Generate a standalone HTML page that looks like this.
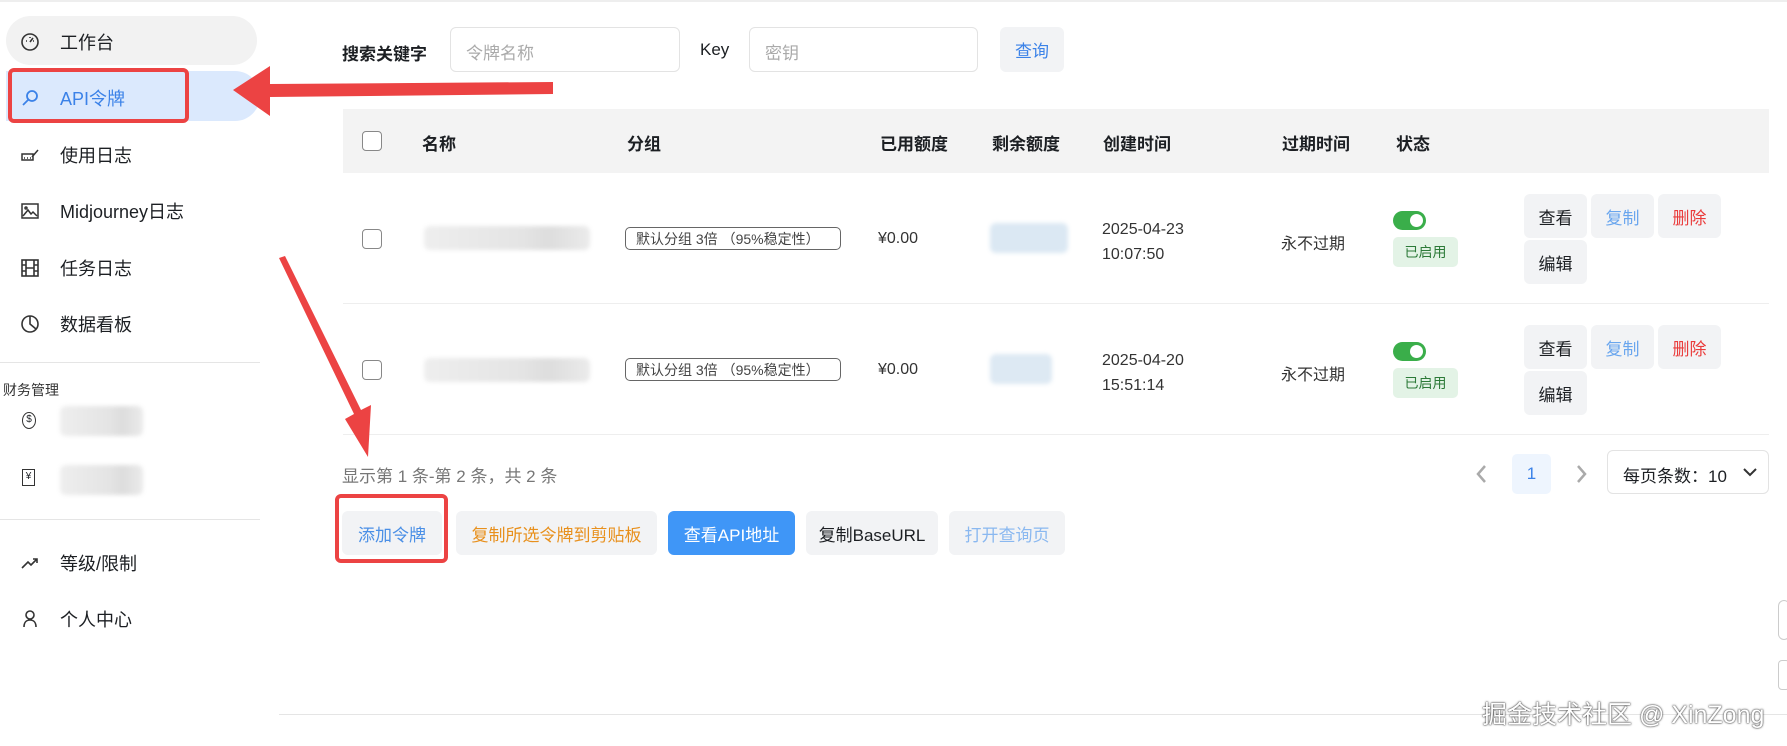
<!DOCTYPE html>
<html><head><meta charset="utf-8">
<style>
*{box-sizing:border-box;margin:0;padding:0}
body{width:1787px;height:746px;overflow:hidden;background:#fff;font-family:"Liberation Sans","Noto Sans CJK SC",sans-serif;color:#1c1f23;position:relative}
.abs{position:absolute}
.nav{position:absolute;left:20px;font-size:18px;color:#1c1f23;display:flex;align-items:center}
.nav svg{width:20px;height:20px;margin-right:20px}
.th{position:absolute;top:130px;font-size:17px;font-weight:bold;color:#1c1f23}
.cb{position:absolute;width:20px;height:20px;border:1.5px solid #888;border-radius:4px;background:#fff}
.btn{position:absolute;background:#f2f3f5;border-radius:6px;display:flex;align-items:center;justify-content:center;font-size:17px}
.tag{position:absolute;left:625px;width:216px;height:23px;border:1px solid #666;border-radius:5px;font-size:14px;color:#444;display:flex;align-items:center;padding-left:10px}
.td{position:absolute;font-size:16px;color:#333}
.blur{position:absolute;background:linear-gradient(90deg,#eee,#e4e4e4 60%,#ddd 75%,#ebebeb);filter:blur(2px);border-radius:6px}
</style></head><body>
<div class="abs" style="left:0;top:0;width:1787px;height:2px;background:#eee"></div>
<!-- sidebar -->
<div class="abs" style="left:6px;top:16px;width:251px;height:49px;background:#f2f2f2;border-radius:25px"></div>
<div class="abs" style="left:6px;top:71px;width:254px;height:50px;background:#dbe9fd;border-radius:0 25px 25px 0"></div>
<div class="abs" style="left:8px;top:68px;width:181px;height:55px;border:4px solid #ec4343;border-radius:6px"></div>
<div class="nav" style="top:29px"><svg viewBox="0 0 20 20" fill="none" stroke="#333" stroke-width="1.6"><circle cx="10" cy="10" r="8"/><path d="M10 10l3-4M6 9h1M13 9h1M10 5v1"/></svg>工作台</div>
<div class="nav" style="top:85px;color:#3b82e8"><svg viewBox="0 0 20 20" fill="none" stroke="#3b82e8" stroke-width="1.8"><circle cx="12" cy="8" r="5"/><path d="M8 12l-5 5"/></svg>API令牌</div>
<div class="nav" style="top:142px"><svg viewBox="0 0 20 20" fill="none" stroke="#333" stroke-width="1.5"><path d="M2 9h11v6H2zM12 12l6-7M4 13h1M7 13h1M10 13h1"/></svg>使用日志</div>
<div class="nav" style="top:198px"><svg viewBox="0 0 20 20" fill="none" stroke="#333" stroke-width="1.5"><rect x="2" y="3" width="16" height="14"/><path d="M3 15l5-6 3 4 2-2 4 4"/><circle cx="6" cy="7" r="1"/></svg>Midjourney日志</div>
<div class="nav" style="top:255px"><svg viewBox="0 0 20 20" fill="none" stroke="#333" stroke-width="1.6"><rect x="2" y="2" width="16" height="16"/><path d="M6 2v16M14 2v16M2 7h4M2 13h4M14 7h4M14 13h4M6 10h8"/></svg>任务日志</div>
<div class="nav" style="top:311px"><svg viewBox="0 0 20 20" fill="none" stroke="#333" stroke-width="1.6"><circle cx="10" cy="10" r="8"/><path d="M10 2v8l6 5"/></svg>数据看板</div>
<div class="abs" style="left:0;top:362px;width:260px;height:1px;background:#e5e5e5"></div>
<div class="abs" style="left:3px;top:380px;font-size:14px;color:#333">财务管理</div>
<div class="abs" style="left:22px;top:412px;width:14px;height:17px;border:1.4px solid #333;border-radius:50%;font-size:10px;text-align:center;line-height:14px">$</div>
<div class="blur" style="left:60px;top:406px;width:83px;height:30px"></div>
<div class="abs" style="left:22px;top:469px;width:13px;height:17px;border:1.4px solid #333;font-size:10px;text-align:center;line-height:14px">¥</div>
<div class="blur" style="left:60px;top:465px;width:83px;height:30px"></div>
<div class="abs" style="left:0;top:519px;width:260px;height:1px;background:#e5e5e5"></div>
<div class="nav" style="top:550px"><svg viewBox="0 0 20 20" fill="none" stroke="#333" stroke-width="1.6"><path d="M2 15l6-6 3 3 6-6M13 6h4v4"/></svg>等级/限制</div>
<div class="nav" style="top:606px"><svg viewBox="0 0 20 20" fill="none" stroke="#333" stroke-width="1.6"><circle cx="10" cy="6" r="4"/><path d="M4 18c0-4 2-7 6-7s6 3 6 7"/></svg>个人中心</div>
<!-- search -->
<div class="abs" style="left:342px;top:40px;font-size:17px;font-weight:bold">搜索关键字</div>
<div class="abs" style="left:450px;top:27px;width:230px;height:45px;border:1px solid #e3e3e3;border-radius:6px;padding:11px 15px;font-size:17px;color:#aaa">令牌名称</div>
<div class="abs" style="left:700px;top:40px;font-size:17px">Key</div>
<div class="abs" style="left:749px;top:27px;width:229px;height:45px;border:1px solid #e3e3e3;border-radius:6px;padding:11px 15px;font-size:17px;color:#aaa">密钥</div>
<div class="btn" style="left:1000px;top:27px;width:64px;height:45px;color:#3b82e8">查询</div>
<!-- table -->
<div class="abs" style="left:343px;top:109px;width:1426px;height:64px;background:#f3f3f3"></div>
<div class="cb" style="left:362px;top:131px"></div>
<div class="th" style="left:422px">名称</div><div class="th" style="left:627px">分组</div><div class="th" style="left:880px">已用额度</div><div class="th" style="left:992px">剩余额度</div><div class="th" style="left:1103px">创建时间</div><div class="th" style="left:1282px">过期时间</div><div class="th" style="left:1396px">状态</div>
<div class="abs" style="left:343px;top:303px;width:1426px;height:1px;background:#eee"></div>
<div class="abs" style="left:343px;top:434px;width:1426px;height:1px;background:#eee"></div>
<!-- row1 -->
<div class="cb" style="left:362px;top:229px"></div>
<div class="blur" style="left:424px;top:226px;width:166px;height:24px"></div>
<div class="tag" style="top:227px">默认分组 3倍 （95%稳定性）</div>
<div class="td" style="left:878px;top:230px">¥0.00</div>
<div class="blur" style="left:990px;top:223px;width:78px;height:30px;background:#dbe8f3"></div>
<div class="td" style="left:1102px;top:217px;line-height:25px">2025-04-23<br>10:07:50</div>
<div class="td" style="left:1281px;top:230px">永不过期</div>
<div class="abs" style="left:1393px;top:211px;width:33px;height:19px;border-radius:10px;background:#3aae4a"><div class="abs" style="right:3px;top:3px;width:13px;height:13px;border-radius:50%;background:#fff"></div></div>
<div class="abs" style="left:1393px;top:237px;width:65px;height:30px;border-radius:5px;background:#e3f3e6;color:#2c7a38;font-size:14px;text-align:center;line-height:30px">已启用</div>
<div class="btn" style="left:1524px;top:194px;width:63px;height:44px">查看</div>
<div class="btn" style="left:1591px;top:194px;width:63px;height:44px;color:#6aa6ee">复制</div>
<div class="btn" style="left:1658px;top:194px;width:63px;height:44px;color:#ea3b3b">删除</div>
<div class="btn" style="left:1524px;top:240px;width:63px;height:44px">编辑</div>
<!-- row2 -->
<div class="cb" style="left:362px;top:360px"></div>
<div class="blur" style="left:424px;top:358px;width:166px;height:24px"></div>
<div class="tag" style="top:358px">默认分组 3倍 （95%稳定性）</div>
<div class="td" style="left:878px;top:361px">¥0.00</div>
<div class="blur" style="left:990px;top:354px;width:62px;height:30px;background:#dde9f3"></div>
<div class="td" style="left:1102px;top:348px;line-height:25px">2025-04-20<br>15:51:14</div>
<div class="td" style="left:1281px;top:361px">永不过期</div>
<div class="abs" style="left:1393px;top:342px;width:33px;height:19px;border-radius:10px;background:#3aae4a"><div class="abs" style="right:3px;top:3px;width:13px;height:13px;border-radius:50%;background:#fff"></div></div>
<div class="abs" style="left:1393px;top:368px;width:65px;height:30px;border-radius:5px;background:#e3f3e6;color:#2c7a38;font-size:14px;text-align:center;line-height:30px">已启用</div>
<div class="btn" style="left:1524px;top:325px;width:63px;height:44px">查看</div>
<div class="btn" style="left:1591px;top:325px;width:63px;height:44px;color:#6aa6ee">复制</div>
<div class="btn" style="left:1658px;top:325px;width:63px;height:44px;color:#ea3b3b">删除</div>
<div class="btn" style="left:1524px;top:371px;width:63px;height:44px">编辑</div>
<!-- pagination -->
<div class="abs" style="left:342px;top:462px;font-size:17px;color:#777">显示第 1 条-第 2 条，共 2 条</div>
<svg class="abs" style="left:1474px;top:464px" width="14" height="20"><path d="M11 2L4 10l7 8" fill="none" stroke="#aaa" stroke-width="2.5"/></svg>
<div class="abs" style="left:1512px;top:454px;width:39px;height:40px;background:#eef5fe;border-radius:5px;color:#3b82e8;font-size:17px;text-align:center;line-height:40px">1</div>
<svg class="abs" style="left:1575px;top:464px" width="14" height="20"><path d="M3 2l7 8-7 8" fill="none" stroke="#aaa" stroke-width="2.5"/></svg>
<div class="abs" style="left:1607px;top:450px;width:162px;height:44px;border:1px solid #e3e3e3;border-radius:6px;font-size:17px;padding:11px 15px">每页条数：10</div>
<svg class="abs" style="left:1742px;top:467px" width="16" height="10"><path d="M2 2l6 6 6-6" fill="none" stroke="#333" stroke-width="2"/></svg>
<!-- bottom buttons -->
<div class="btn" style="left:342px;top:511px;width:100px;height:44px;color:#4a8fe6">添加令牌</div>
<div class="btn" style="left:456px;top:511px;width:201px;height:44px;color:#e8901d">复制所选令牌到剪贴板</div>
<div class="btn" style="left:668px;top:511px;width:127px;height:44px;background:#3f96f7;color:#fff">查看API地址</div>
<div class="btn" style="left:806px;top:511px;width:132px;height:44px">复制BaseURL</div>
<div class="btn" style="left:949px;top:511px;width:116px;height:44px;color:#8ab8f0">打开查询页</div>
<div class="abs" style="left:335px;top:494px;width:113px;height:69px;border:4px solid #ec4343;border-radius:6px"></div>
<!-- footer -->
<div class="abs" style="left:279px;top:714px;width:1508px;height:1px;background:#e5e5e5"></div>
<div class="abs" style="left:1482px;top:695px;font-size:25px;color:#fff;text-shadow:0 0 2px #333,0 0 1px #333">掘金技术社区 @ XinZong</div>
<div class="abs" style="left:1778px;top:600px;width:12px;height:40px;border:1px solid #ccc;border-radius:6px"></div>
<div class="abs" style="left:1778px;top:660px;width:12px;height:30px;border:1px solid #ccc;border-radius:4px"></div>
<!-- arrows -->
<svg class="abs" style="left:0;top:0" width="1787" height="746">
<polygon points="553,82 553,94 270,97 270,116 233,90 270,66 270,84" fill="#ec4343"/>
<polygon points="279,258 285,256 361,410 371,405 368,457 345,419 354,414" fill="#ec4343"/>
</svg>
</body></html>
